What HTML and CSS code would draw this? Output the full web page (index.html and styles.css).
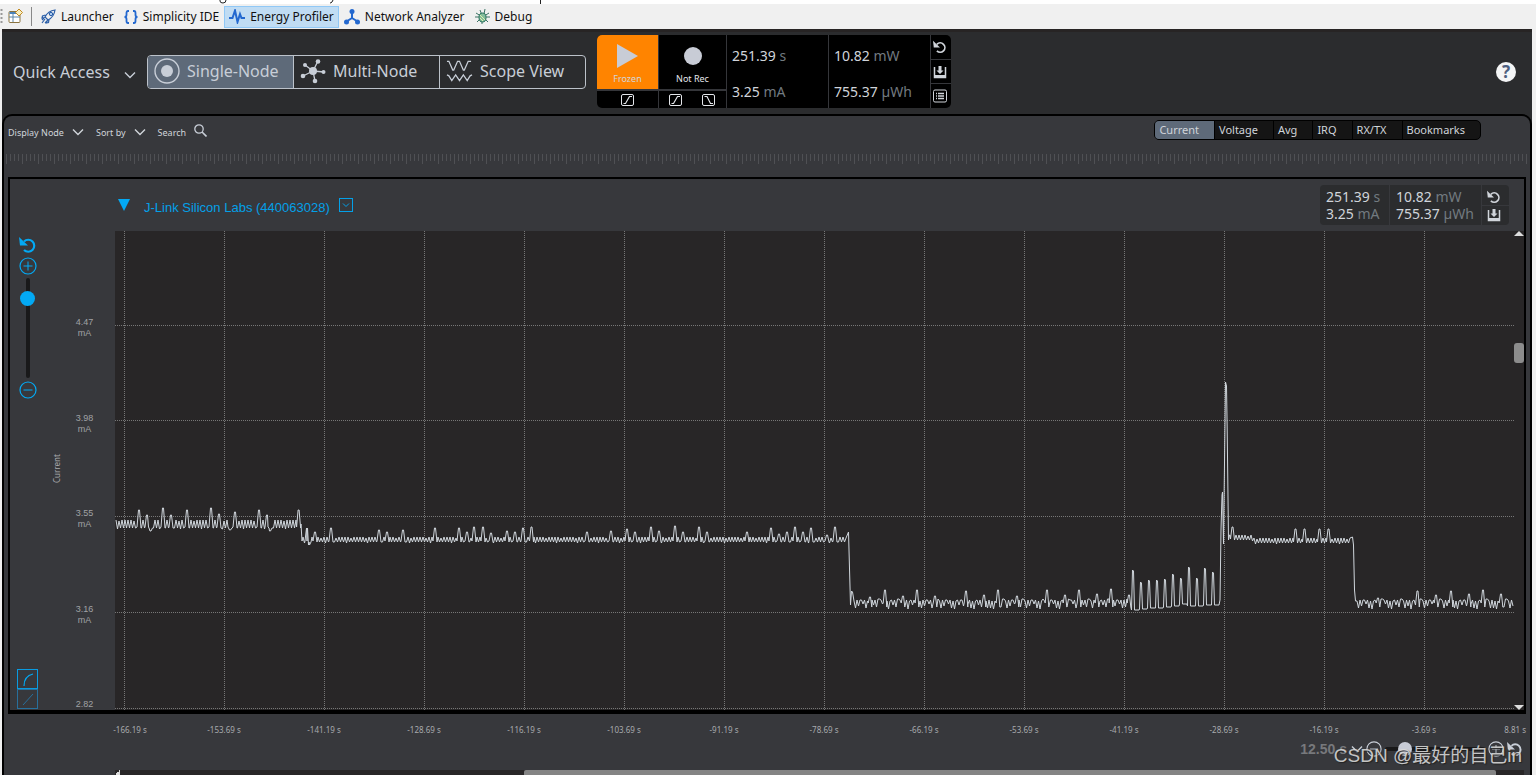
FILE: index.html
```html
<!DOCTYPE html>
<html lang="en">
<head>
<meta charset="utf-8">
<title>Energy Profiler</title>
<link rel="stylesheet" href="styles.css">
</head>
<body>
<svg width="0" height="0" class="defs" aria-hidden="true">
  <symbol id="reset" viewBox="0 0 18 18"><path d="M5 5.500A6 6 0 1 1 5 14" fill="none" stroke="currentColor" stroke-width="2.200"/><path d="M0 1l1 8.500h8z" fill="currentColor"/></symbol>
  <symbol id="save" viewBox="0 0 14 14"><path d="M1.500 2v10.500h11V2" fill="none" stroke="currentColor" stroke-width="1.500"/><path d="M1 10h12v3H1zM5.500 1h3v4.500h2L7 9 3.500 5.500h2z" fill="currentColor"/></symbol>
  <symbol id="list" viewBox="0 0 14 14"><rect x=".5" y="1" width="13" height="12" rx="1.500" fill="none" stroke="currentColor"/><path d="M3 4.500h1M5 4.500h6M3 7h1M5 7h6M3 9.500h1M5 9.500h6" stroke="currentColor" stroke-width="1.300"/></symbol>
  <symbol id="rise" viewBox="0 0 14 12"><rect x=".5" y=".5" width="12" height="11" rx="1.500" fill="none" stroke="currentColor"/><path d="M2.500 9.500h2l4-7h2.500" fill="none" stroke="currentColor" stroke-width="1.200"/></symbol>
  <symbol id="fall" viewBox="0 0 14 12"><rect x=".5" y=".5" width="12" height="11" rx="1.500" fill="none" stroke="currentColor"/><path d="M2.500 2.500h2.500l3.500 7h2.500" fill="none" stroke="currentColor" stroke-width="1.200"/></symbol>
  <symbol id="chev" viewBox="0 0 12 8"><path d="M1 1.500l5 5 5-5" fill="none" stroke="currentColor" stroke-width="1.400"/></symbol>
  <symbol id="plus" viewBox="0 0 18 18"><circle cx="9" cy="9" r="8" fill="none" stroke="currentColor" stroke-width="1.200"/><path d="M4.500 9h9M9 4.500v9" stroke="currentColor"/></symbol>
  <symbol id="minus" viewBox="0 0 18 18"><circle cx="9" cy="9" r="8" fill="none" stroke="currentColor" stroke-width="1.200"/><path d="M4.500 9h9" stroke="currentColor"/></symbol>
</svg>

<div class="menu-edge">
  <svg width="560" height="4"><path d="M220 0v1q0 2 3 2t3-3M333 0l-1 2q-1 1-2 1M540.500 0v4" fill="none" stroke="#222"/></svg>
</div>

<nav class="perspectives" aria-label="Perspectives">
  <svg class="grip" width="3" height="16"><path d="M1.500 0v16" stroke="#999" stroke-width="2" stroke-dasharray="2 2"/></svg>
  <button class="persp open" aria-label="Open perspective"><svg width="15" height="15" viewBox="0 0 15 15"><rect x="1" y="2.500" width="11" height="11" rx="1" fill="#fff" stroke="#8b7440"/><path d="M1.500 4h8" stroke="#4b83ba" stroke-width="2"/><path d="M5 5v8M1 8h11" stroke="#5c86a8"/><path d="M11 0l3.500 3.500L11 7 7.500 3.500z" fill="#f8edbe" stroke="#c18b22"/></svg></button>
  <span class="rule"></span>
  <button class="persp"><svg width="15" height="15" viewBox="0 0 15 15"><path d="M4 8q3-6 10-7-1 7-7 10zM4.500 6L1.500 7l-.5 2 3-.5M8 10.500l-.5 3-2 .5 1-3M4 10l-3 4M3 9l-2 2M6 12l-2 2" fill="none" stroke="#2c5fa8" stroke-width="1.200"/><circle cx="10" cy="5" r="1.700" fill="#a9caf0" stroke="#2c5fa8"/></svg>Launcher</button>
  <button class="persp"><svg width="14" height="14" viewBox="0 0 14 14"><path d="M5 1H4Q2.500 1 2.500 3v2Q2.500 7 .5 7q2 0 2 2v2q0 2 1.500 2h1M9 1h1q1.500 0 1.500 2v2q0 2 2 2-2 0-2 2v2q0 2-1.500 2H9" fill="none" stroke="#2368cf" stroke-width="1.800"/></svg>Simplicity IDE</button>
  <button class="persp active"><svg width="16" height="15" viewBox="0 0 16 15"><path d="M0 9h3.500L6 1.500 8.500 13 11 5l1.500 4H16" fill="none" stroke="#2368cf" stroke-width="2"/></svg>Energy Profiler</button>
  <button class="persp"><svg width="16" height="16" viewBox="0 0 16 16"><path d="M8 3v6l-5.500 3.500M8 9l5.500 3.500" fill="none" stroke="#2368cf" stroke-width="2"/><circle cx="8" cy="2.500" r="2.500" fill="#2368cf"/><circle cx="2.500" cy="13" r="2.500" fill="#2368cf"/><circle cx="13.500" cy="13" r="2.500" fill="#2368cf"/></svg>Network Analyzer</button>
  <button class="persp"><svg width="15" height="15" viewBox="0 0 15 15"><path d="M5 1l1.500 4M10 0L9 5M1 4l4 2.500M14 4l-4 2.500M0 8h4M11 8h4M2 13l3-3M13 13l-3-3M7 15v-3" stroke="#3d7364"/><ellipse cx="7.500" cy="8.500" rx="3.500" ry="4.500" fill="#83bd9b" stroke="#28705c"/><path d="M5 6l5 5M5 9l3 3" stroke="#e1efaf"/></svg>Debug</button>
</nav>

<main class="app">
  <header class="header">
    <button class="quick">Quick Access <svg width="12" height="8"><use href="#chev"/></svg></button>
    <div class="modes">
      <button class="mode on"><svg width="26" height="26" viewBox="0 0 26 26"><circle cx="13" cy="13" r="12" fill="none" stroke="#c8ced7" stroke-width="1.400"/><circle cx="13" cy="13" r="6" fill="#c8ced7"/></svg>Single-Node</button>
      <button class="mode"><svg width="26" height="26" viewBox="0 0 26 26"><path d="M13 13l5-10M13 13L5 7M13 13l11 1M13 13L3 18M13 13l2 10" stroke="#c8ced7" stroke-width="1.300"/><g fill="#c8ced7"><circle cx="13" cy="13" r="4"/><circle cx="18" cy="3.500" r="2.300"/><circle cx="5" cy="7" r="2"/><circle cx="23.500" cy="14" r="2"/><circle cx="3" cy="18" r="2.300"/><circle cx="15" cy="23" r="2.300"/></g></svg>Multi-Node</button>
      <button class="mode"><svg width="27" height="24" viewBox="0 0 28 24"><path d="M1 2h2l4 9h1l4-9h2l4 9h1l4-9h3M1 16l2 1 3 5 4-6 4 6 4-6 4 6 3-5 2-1" fill="none" stroke="#c8ced7" stroke-width="1.300"/></svg>Scope View</button>
    </div>
    <section class="console" aria-label="Capture">
      <div class="cell pair play-cell">
        <button class="play"><svg width="22" height="24"><path d="M0 0l21 12L0 24z" fill="#c8ccd6"/></svg>Frozen</button>
        <div class="edges"><button aria-label="Rising trigger"><svg width="14" height="12"><use href="#rise"/></svg></button></div>
      </div>
      <div class="cell pair rec-cell">
        <button class="rec"><svg width="18" height="18"><circle cx="9" cy="9" r="9" fill="#c8ccd6"/></svg>Not Rec</button>
        <div class="edges"><button aria-label="Start trigger"><svg width="14" height="12"><use href="#rise"/></svg></button><button aria-label="Stop trigger"><svg width="14" height="12"><use href="#fall"/></svg></button></div>
      </div>
      <div class="cell values"><p>251.39 <i>s</i></p><p>3.25 <i>mA</i></p></div>
      <div class="cell values"><p>10.82 <i>mW</i></p><p>755.37 <i>µWh</i></p></div>
      <div class="cell side">
        <button aria-label="Reset"><svg width="14" height="14"><use href="#reset"/></svg></button>
        <button aria-label="Save"><svg width="14" height="14"><use href="#save"/></svg></button>
        <button aria-label="List"><svg width="14" height="14"><use href="#list"/></svg></button>
      </div>
    </section>
    <button class="help" aria-label="Help">?</button>
  </header>

  <section class="panel">
    <div class="filters">
      <button class="filter">Display Node <svg width="12" height="8"><use href="#chev"/></svg></button>
      <button class="filter">Sort by <svg width="12" height="8"><use href="#chev"/></svg></button>
      <button class="filter search">Search <svg width="13" height="13" viewBox="0 0 13 13"><circle cx="5" cy="5" r="4.200" fill="none" stroke="#c8ced7" stroke-width="1.300"/><path d="M8 8l4.500 4.500" stroke="#c8ced7" stroke-width="1.600"/></svg></button>
      <div class="series"><button class="on">Current</button><button>Voltage</button><button>Avg</button><button>IRQ</button><button>RX/TX</button><button>Bookmarks</button></div>
    </div>
    <div class="ruler"></div>

    <section class="device">
      <header class="device-head">
        <svg class="marker" width="12" height="12"><path d="M0 0h12L6 12z" fill="#03a9f4"/></svg>
        <h1>J-Link Silicon Labs (440063028)</h1>
        <button class="more" aria-label="Device menu"><svg width="14" height="14"><rect x=".5" y=".5" width="13" height="13" fill="none" stroke="#03a0e8"/><path d="M4 5.500l3 3 3-3" fill="none" stroke="#03a0e8"/></svg></button>
        <div class="mini">
          <div class="mini-cell"><p>251.39 <i>s</i></p><p>3.25 <i>mA</i></p></div>
          <div class="mini-cell wide"><p>10.82 <i>mW</i></p><p>755.37 <i>µWh</i></p></div>
          <div class="mini-tools"><button aria-label="Reset"><svg width="14" height="14"><use href="#reset"/></svg></button><button aria-label="Save"><svg width="14" height="14"><use href="#save"/></svg></button></div>
        </div>
      </header>
      <div class="chart">
        <div class="tools">
          <button aria-label="Reset scale"><svg width="18" height="18"><use href="#reset"/></svg></button>
          <button aria-label="Zoom in"><svg width="18" height="18"><use href="#plus"/></svg></button>
          <input class="vrange" type="range" min="0" max="100" value="85" aria-label="Vertical zoom">
          <button aria-label="Zoom out"><svg width="18" height="18"><use href="#minus"/></svg></button>
          <div class="scales">
            <button aria-label="Logarithmic"><svg width="20" height="20"><path d="M6 16q0-10 9-12" fill="none" stroke="currentColor" stroke-width="1.200"/></svg></button>
            <button class="dim" aria-label="Linear"><svg width="20" height="20"><path d="M5 15L15 4" stroke="currentColor"/></svg></button>
          </div>
        </div>
        <div class="axis-name">Current</div>
        <div class="yaxis"><span>4.47<br>mA</span><span>3.98<br>mA</span><span>3.55<br>mA</span><span>3.16<br>mA</span><span>2.82</span></div>
        <div class="plot">
          <svg viewBox="115 231 1399 479" preserveAspectRatio="none" role="img" aria-label="Current over time">
            <g id="grid"></g>
            <path id="trace"></path>
          </svg>
          <div class="vscroll">
            <svg width="10" height="5"><path d="M0 5l5-5 5 5z" fill="#ddd"/></svg>
            <span class="vthumb"></span>
            <svg class="down" width="10" height="5"><path d="M0 0l5 5 5-5z" fill="#ddd"/></svg>
          </div>
        </div>
      </div>
    </section>

    <div class="xaxis"><span>-166.19 s</span><span>-153.69 s</span><span>-141.19 s</span><span>-128.69 s</span><span>-116.19 s</span><span>-103.69 s</span><span>-91.19 s</span><span>-78.69 s</span><span>-66.19 s</span><span>-53.69 s</span><span>-41.19 s</span><span>-28.69 s</span><span>-16.19 s</span><span>-3.69 s</span><span>8.81 s</span></div>
    <div class="timebar">
      <button class="span">12.50 s <svg width="12" height="8"><use href="#chev"/></svg></button>
      <button aria-label="Zoom time out"><svg width="16" height="16"><use href="#minus"/></svg></button>
      <input class="hrange" type="range" min="0" max="100" value="15" aria-label="Time zoom">
      <button aria-label="Zoom time in"><svg width="16" height="16"><use href="#plus"/></svg></button>
      <button aria-label="Reset time"><svg width="16" height="16"><use href="#reset"/></svg></button>
      <span class="credit">CSDN @最好的自己in</span>
    </div>
    <div class="hscroll"><span class="hthumb"></span></div>
  </section>
</main>
<script src="chart.js"></script>
</body>
</html>
```

FILE: styles.css
```css
* { box-sizing: border-box; }
body {
  margin: 0;
  height: 100vh;
  overflow: hidden;
  display: flex;
  flex-direction: column;
  background: #f0f0f0;
  color: #d0d4da;
  font-family: "Noto Sans", "Noto Sans CJK SC", sans-serif;
}
button {
  padding: 0;
  border: 0;
  background: none;
  color: inherit;
  font: inherit;
}
p, h1 { margin: 0; }
i { font-style: normal; color: #727a80; }
svg { display: block; flex: none; }
.defs { position: absolute; }

.menu-edge { height: 4px; background: #fff; }
.perspectives {
  flex: none;
  height: 25px;
  display: flex;
  align-items: center;
  color: #111;
  font-size: 12px;
}
.persp {
  height: 22px;
  display: flex;
  align-items: center;
  gap: 5px;
  padding: 0 4px;
  border: 1px solid transparent;
  white-space: nowrap;
}
.persp.active { background: #c0dcf3; border-color: #90c8f6; }
.rule { width: 1px; height: 19px; margin: 0 4px 0 3px; background: #888; }

.app {
  flex: 1;
  min-height: 0;
  margin: 0 4px 0 2px;
  display: flex;
  flex-direction: column;
  background: #2b2c2e;
}
.header {
  flex: none;
  height: 85px;
  display: flex;
  align-items: center;
  padding: 0 16px 0 11px;
  box-shadow: inset 0 3px #272424;
}
.quick {
  width: 134px;
  display: flex;
  align-items: center;
  justify-content: space-between;
  padding-right: 11px;
  color: #c8ced7;
  font-size: 16px;
}
.quick svg { margin-top: 6px; }
.modes {
  display: flex;
  width: 439px;
  height: 34px;
  border: 1px solid #bcc2ca;
  border-radius: 4px;
  overflow: hidden;
}
.mode {
  flex: 1;
  display: flex;
  align-items: center;
  gap: 7px;
  padding: 0 0 2px 6px;
  color: #c8ced7;
  font-size: 16px;
  border-left: 1px solid #bcc2ca;
}
.mode:first-child { border-left: 0; }
.mode.on { background: #5e6a79; }
.console {
  display: flex;
  width: 354px;
  height: 73px;
  margin-left: 11px;
  background: #000;
  border-radius: 5px;
  overflow: hidden;
}
.cell { border-left: 1px solid #35363a; }
.cell:first-child { border-left: 0; }
.pair { display: flex; flex-direction: column; font-size: 9px; }
.play-cell { width: 61px; }
.rec-cell { width: 68px; }
.play, .rec {
  flex: 1;
  display: flex;
  flex-direction: column;
  align-items: center;
  justify-content: flex-end;
  gap: 4px;
  padding-bottom: 4px;
  line-height: 13px;
}
.play { background: #ff8400; }
.rec { gap: 7px; color: #e4e6ea; }
.edges {
  height: 19px;
  display: flex;
  align-items: center;
  justify-content: space-around;
  border-top: 2px solid #35363a;
  color: #e4e6ea;
}
.values {
  flex: 1;
  display: flex;
  flex-direction: column;
  justify-content: space-between;
  padding: 11px 0 6px 5px;
  font-size: 14px;
  line-height: 20px;
}
.side { width: 21px; display: flex; flex-direction: column; }
.side button {
  flex: 1;
  display: flex;
  align-items: center;
  justify-content: center;
  padding-right: 2px;
  border-top: 1px solid #35363a;
}
.side button:first-child { border-top: 0; }
.help {
  width: 20px;
  height: 20px;
  margin-left: auto;
  border-radius: 50%;
  background: #f4f5f6;
  color: #4d5f80;
  font-size: 17px;
  font-weight: 700;
  line-height: 20px;
}

.panel {
  flex: 1;
  min-height: 0;
  display: flex;
  flex-direction: column;
  background: #37383c;
  border: solid #000;
  border-width: 2px 2px 0;
  border-radius: 10px 10px 0 0;
}
.filters {
  flex: none;
  height: 38px;
  display: flex;
  align-items: flex-start;
  padding: 4px 49px 0 4px;
}
.filter {
  display: flex;
  align-items: center;
  gap: 8px;
  height: 24px;
  margin-right: 12px;
  font-size: 9px;
}
.search svg { margin-top: -4px; }
.series {
  display: flex;
  height: 20px;
  margin-left: auto;
  border: 1px solid #000;
  border-radius: 5px;
  overflow: hidden;
  background: #151515;
  font-size: 11px;
  line-height: 18px;
}
.series button {
  padding: 0 15px 0 4px;
  border-left: 1px solid #000;
}
.series .on { background: #5e6a79; border-left: 0; }
.ruler {
  flex: none;
  height: 23px;
  margin: 0 2px;
  background:
    repeating-linear-gradient(90deg, #4f5054 0 1px, transparent 1px 16px) 0 0 / 100% 10px no-repeat,
    repeating-linear-gradient(90deg, #4f5054 0 1px, transparent 1px 4px) 0 0 / 100% 7px no-repeat;
}
.device {
  flex: 1;
  min-height: 0;
  display: flex;
  flex-direction: column;
  margin: 0 4px;
  border: solid #000;
  border-width: 2px 2px 4px;
}
.device-head {
  flex: none;
  height: 52px;
  display: flex;
  align-items: center;
  padding: 0 15px 0 108px;
}
.device-head h1 {
  margin: 4px 9px 0 14px;
  color: #03a0e8;
  font: 13px "Liberation Sans", sans-serif;
}
.mini {
  display: flex;
  height: 40px;
  margin-left: auto;
  border-radius: 4px;
  background: #2b2c2e;
  font-size: 14px;
  line-height: 17px;
}
.mini-cell { width: 69px; padding: 3px 0 0 6px; }
.mini-cell.wide { width: 92px; border-left: 1px solid #37383c; }
.mini-tools { width: 28px; border-left: 1px solid #37383c; }
.mini-tools button {
  width: 100%;
  height: 20px;
  display: flex;
  align-items: center;
  justify-content: center;
  padding: 3px 3px 0 0;
}
.mini-tools button + button { padding: 0 3px 2px 0; border-top: 1px solid #37383c; }
.chart { flex: 1; min-height: 0; display: flex; }
.tools {
  width: 35px;
  display: flex;
  flex-direction: column;
  align-items: center;
  padding: 5px 0 1px;
  gap: 3px;
  color: #03a9f4;
}
.tools input, .timebar input { appearance: none; margin: 0; background: none; }
.vrange {
  width: 16px;
  height: 100px;
  writing-mode: vertical-lr;
  direction: rtl;
}
.vrange::-webkit-slider-runnable-track {
  width: 4px;
  height: 100%;
  border-radius: 2px;
  background: #19191a;
}
.vrange::-webkit-slider-thumb {
  appearance: none;
  width: 15px;
  height: 15px;
  margin-left: -6px;
  border-radius: 50%;
  background: #03a9f4;
}
.scales { margin-top: auto; }
.scales button {
  display: block;
  width: 21px;
  height: 20px;
  border: 1px solid #0a9be0;
}
.scales .dim { color: #28709c; border-color: #28709c; }
.axis-name {
  width: 24px;
  writing-mode: vertical-rl;
  transform: rotate(180deg);
  padding-top: 4px;
  text-align: center;
  font-size: 8px;
  line-height: 24px;
  color: #a8aaad;
}
.yaxis {
  width: 46px;
  display: grid;
  grid-template-rows: repeat(5, 1fr);
  align-items: end;
  justify-items: center;
  padding: 2px 15px 0 0;
  color: #a0a2a5;
  font: 9px/11px "Liberation Sans", sans-serif;
  text-align: center;
}
.yaxis span { height: 11px; }
.plot { flex: 1; min-width: 0; display: flex; background: #282627; }
.plot > svg { flex: 1; min-width: 0; height: 100%; }
.grid-line {
  stroke: #777;
  stroke-dasharray: 1 1;
  vector-effect: non-scaling-stroke;
  shape-rendering: crispEdges;
}
#trace { fill: none; stroke: #d0d6dc; vector-effect: non-scaling-stroke; }
.vscroll { width: 10px; display: flex; flex-direction: column; }
.vthumb { height: 20px; margin-top: 107px; border-radius: 3px; background: #8c8c8c; }
.down { margin-top: auto; }

.xaxis {
  flex: none;
  display: grid;
  grid-template-columns: repeat(14, 1fr) 52px;
  margin: 10px 4px 0 70px;
  color: #a8aaad;
  font-size: 8px;
  line-height: 12px;
  text-align: center;
}
.xaxis span:first-child { padding-left: 12px; }
.xaxis span:last-child { text-align: right; }
.timebar {
  position: relative;
  flex: none;
  height: 26px;
  display: flex;
  align-items: center;
  justify-content: flex-end;
  gap: 3px;
  padding-right: 7px;
}
.span {
  display: flex;
  align-items: center;
  gap: 4px;
  color: #77797c;
  font: bold 14px "Liberation Sans", sans-serif;
}
.timebar svg { color: #c8ced7; }
.hrange { width: 100px; height: 16px; }
.hrange::-webkit-slider-runnable-track {
  height: 4px;
  border-radius: 2px;
  background: #19191a;
}
.hrange::-webkit-slider-thumb {
  appearance: none;
  width: 14px;
  height: 14px;
  margin-top: -5px;
  border-radius: 50%;
  background: #c8ccd6;
}
.credit {
  position: absolute;
  right: 8px;
  top: 6px;
  color: rgba(225, 225, 225, .85);
  font: 19px/28px "Liberation Sans", "Noto Sans CJK SC", sans-serif;
  text-shadow: 1px 1px 1px #222;
  white-space: nowrap;
  pointer-events: none;
}
.hscroll {
  flex: none;
  height: 5px;
  display: flex;
  margin: 8px 6px 0 111px;
  background: #282627 linear-gradient(135deg, transparent 50%, #ddd 50%) 0 0 / 5px 5px no-repeat;
}
.hthumb { width: 69%; margin-left: 29%; background: #848484; border-radius: 2px 2px 0 0; }
```

FILE: chart.js
```js
const NS = "http://www.w3.org/2000/svg";
const grid = document.getElementById("grid");

function gridLine(x1, y1, x2, y2) {
  const line = document.createElementNS(NS, "line");
  Object.entries({ x1, y1, x2, y2, class: "grid-line" }).forEach(([k, v]) => line.setAttribute(k, v));
  grid.append(line);
}
for (let x = 124.5; x < 1500; x += 100) gridLine(x, 231, x, 710);
[325.5, 420.5, 516.5, 612.5, 708.5].forEach(y => gridLine(115, y, 1514, y));

// Regular ripple between two levels, interrupted by single samples.
function ripple(from, to, high, low, marks) {
  const points = [];
  for (let x = from, n = 0; x <= to; x += 1.5, n++) {
    if (marks.some(m => Math.abs(m[0] - x) < 2.4)) continue;
    points.push([x, n % 2 ? low + (n % 7 === 1 ? 1 : 0) : high + (n % 5 === 2 ? 1 : 0)]);
  }
  marks.forEach(([x, y]) => {
    points.push([x - 2, low - 1], [x - 0.5, y], [x + 0.5, y], [x + 2, low]);
  });
  return points.sort((a, b) => a[0] - b[0]);
}

// Sleep current: flat level with short uneven dips.
function idle(from, to, peaks) {
  const shape = [601, 608, 600, 606, 600, 600, 604, 600, 608, 601, 609, 601, 600, 605, 600, 607, 599, 599];
  const points = [];
  for (let x = from, n = 0; x <= to; x += 1.5, n++) {
    if (peaks.some(p => Math.abs(p[0] - x) < 2)) continue;
    points.push([x, shape[(n + Math.floor(n / 18) * 5) % 18]]);
  }
  peaks.forEach(([x, y]) => points.push([x - 1.8, 603], [x - 0.5, y], [x + 0.5, y], [x + 1.8, 607]));
  return points.sort((a, b) => a[0] - b[0]);
}

const active = ripple(116, 299, 520, 528, [
  [139, 510], [147, 515], [150.5, 531], [163, 508], [171, 515], [187, 510], [211, 508], [219, 514],
  [230, 530], [235, 512], [259, 510], [267, 515], [270, 531], [298.6, 510]
]);
const receive = ripple(303, 847, 537, 542, [
  [307, 528], [309, 545], [315, 532], [331, 528], [379, 530], [387, 532], [403, 530], [435, 528],
  [459, 528], [467, 532], [474, 527], [483, 527], [491, 533], [507, 531], [515, 532], [523, 528],
  [531.5, 527], [587, 532], [611, 531], [627, 529], [635, 532], [651, 527], [659, 531], [675, 526],
  [683, 532], [699, 527], [707, 532], [747, 532], [771, 528], [779, 534], [787, 532], [795, 527],
  [803, 532], [811, 528], [827, 535], [835, 527]
]);
const sleep = idle(854, 1131, [
  [870, 597], [885, 590], [903, 596], [917, 590], [935, 596], [966, 591], [984, 595], [998, 590],
  [1017, 596], [1047, 590], [1065, 595], [1079, 590], [1097, 594], [1111, 589], [1129, 595]
]);
const pulses = [
  [1133, 570, 610], [1141, 582, 609], [1149, 580, 608], [1157, 580, 608], [1165, 579, 607],
  [1173, 574, 606], [1181, 578, 604], [1189, 567, 606], [1197, 578, 606], [1205, 568, 605], [1213, 572, 605]
].flatMap(([x, top, base]) => [[x - 1.5, base], [x - 0.5, top], [x + 0.5, top + 1], [x + 1.5, base], [x + 6, base]]);
const burst = [
  [1220, 600], [1221, 530], [1222, 495], [1222.5, 492], [1223.5, 544], [1225.5, 382], [1226.5, 386],
  [1227.2, 430], [1228.5, 540], [1229.5, 535]
];
const settle = ripple(1230, 1253, 535, 540, [[1232.5, 527]]);
const listen = ripple(1254, 1351, 538, 543, [[1295.5, 529], [1304.5, 529], [1319.5, 529], [1328.5, 529]]);
const rest = idle(1357, 1514, [
  [1378, 598], [1417.5, 591], [1436, 595], [1451, 591], [1469, 594], [1483, 590], [1501, 594]
]);

const samples = [
  ...active, [301, 524], [302, 541], ...receive, [848.5, 532], [850.5, 605], [851.5, 591], [852.5, 592],
  ...sleep, ...pulses, ...burst, ...settle, ...listen, [1352.5, 537], [1353.5, 545], [1354.5, 590],
  [1355.5, 601], ...rest
];
document.getElementById("trace").setAttribute("d", "M" + samples.map(p => p.join(" ")).join("L"));
```
